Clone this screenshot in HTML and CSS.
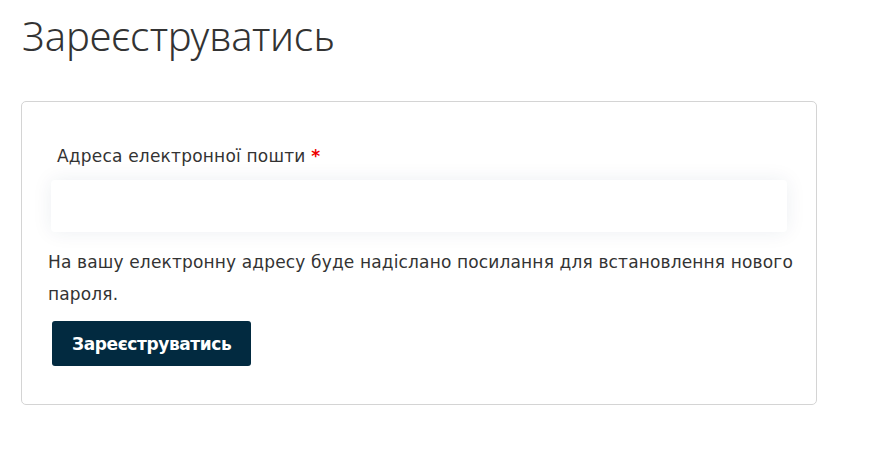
FILE: index.html
```html
<!DOCTYPE html>
<html lang="uk">
<head>
    <meta charset="UTF-8">
    <meta name="viewport" content="width=device-width, initial-scale=1.0">
    <title>Зареєструватись</title>
    <link rel="stylesheet" href="styles.css">
</head>
<body>
    <div class="page">
        <h1 class="page-title">Зареєструватись</h1>
        <form class="card">
            <div class="field">
                <label class="field-label" for="email">Адреса електронної пошти <span class="required">*</span></label>
                <input class="field-input" type="email" id="email">
            </div>
            <p class="hint">На вашу електронну адресу буде надіслано посилання для встановлення нового пароля.</p>
            <button class="submit" type="button">Зареєструватись</button>
        </form>
    </div>
</body>
</html>
```

FILE: styles.css
```css
* {
    box-sizing: border-box;
    margin: 0;
    padding: 0;
}

body {
    font-family: "DejaVu Sans", Arial, sans-serif;
    background-color: #fff;
    color: #333;
}

.page {
    padding: 10px 70px 0 21px;
}

.page-title {
    font-family: "Noto Sans", Arial, sans-serif;
    font-size: 40px;
    font-weight: 300;
    color: #333;
    line-height: 52px;
    margin-bottom: 39px;
    padding-left: 1px;
}

.card {
    width: 796px;
    border: 1px solid #d4d4d4;
    border-radius: 5px;
    padding: 44px 18px 38px 26px;
}

.field {
    padding: 0 11px 0 3px;
}

.field-label {
    display: block;
    font-size: 17px;
    letter-spacing: 0.2px;
    padding-left: 6px;
    margin-bottom: 14px;
    color: #333;
}

.required {
    color: #e00;
    font-weight: 700;
}

.field-input {
    display: block;
    width: 100%;
    height: 52px;
    border: none;
    border-radius: 4px;
    background: #fff;
    box-shadow: 0 0 20px rgba(30, 50, 90, 0.08);
    outline: none;
}

.hint {
    font-size: 17px;
    letter-spacing: 0.15px;
    line-height: 32px;
    margin-top: 14px;
    color: #333;
}

.submit {
    margin: 11px 0 0 4px;
    background-color: #022a40;
    color: #fff;
    border: none;
    border-radius: 3px;
    height: 45px;
    padding: 0 20px;
    font-family: "DejaVu Sans", Arial, sans-serif;
    font-size: 17px;
    letter-spacing: -0.4px;
    font-weight: 700;
}
```
